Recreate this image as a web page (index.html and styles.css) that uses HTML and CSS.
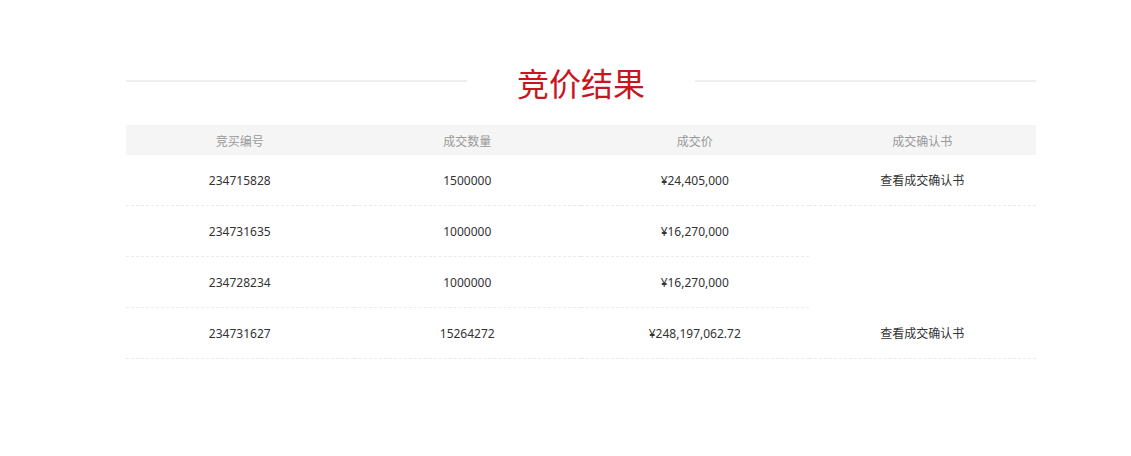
FILE: index.html
```html
<!DOCTYPE html>
<html lang="zh-CN">
<head>
<meta charset="utf-8">
<title>竞价结果</title>
<link rel="stylesheet" href="styles.css">
</head>
<body>
<div class="page">
  <div class="result">
    <div class="title-bar">
      <span class="title-line"></span>
      <h2 class="title">竞价结果</h2>
      <span class="title-line"></span>
    </div>
    <table class="result-table">
      <thead>
        <tr>
          <th>竞买编号</th>
          <th>成交数量</th>
          <th>成交价</th>
          <th>成交确认书</th>
        </tr>
      </thead>
      <tbody>
        <tr>
          <td>234715828</td>
          <td>1500000</td>
          <td>¥24,405,000</td>
          <td><a class="link" href="#">查看成交确认书</a></td>
        </tr>
        <tr>
          <td>234731635</td>
          <td>1000000</td>
          <td>¥16,270,000</td>
          <td class="merged" rowspan="2"></td>
        </tr>
        <tr>
          <td>234728234</td>
          <td>1000000</td>
          <td>¥16,270,000</td>
        </tr>
        <tr>
          <td>234731627</td>
          <td>15264272</td>
          <td>¥248,197,062.72</td>
          <td><a class="link" href="#">查看成交确认书</a></td>
        </tr>
      </tbody>
    </table>
  </div>
</div>
</body>
</html>
```

FILE: styles.css
```css
html, body {
  margin: 0;
  padding: 0;
  background: #fff;
}

body {
  font-family: "Noto Sans", "Noto Sans CJK SC", sans-serif;
  color: #333;
  font-size: 12px;
}

.page {
  padding: 62px 0 0 126px;
}

.result {
  width: 910px;
}

.title-bar {
  display: flex;
  align-items: center;
  height: 40px;
}

.title-line {
  flex: 1;
  height: 2px;
  background: #eeeeee;
  margin-top: -2px;
}

.title {
  width: 228px;
  margin: 0;
  text-align: center;
  font-family: "Noto Sans CJK SC", sans-serif;
  font-weight: normal;
  font-size: 32px;
  line-height: 40px;
  color: #c9151e;
}

.result-table {
  width: 100%;
  margin-top: 23px;
  border-collapse: collapse;
  table-layout: fixed;
}

.result-table th {
  height: 30px;
  padding: 0;
  background: #f5f5f5;
  color: #999;
  font-weight: normal;
  font-size: 12px;
  text-align: center;
  font-family: "Noto Sans CJK SC", sans-serif;
}

.result-table td {
  height: 50px;
  padding: 0;
  text-align: center;
  border-bottom: 1px dashed #ebebeb;
  color: #333;
}

.result-table td.merged {
  border-bottom: none;
}

.link {
  color: #333;
  text-decoration: none;
  font-family: "Noto Sans CJK SC", sans-serif;
}
```
